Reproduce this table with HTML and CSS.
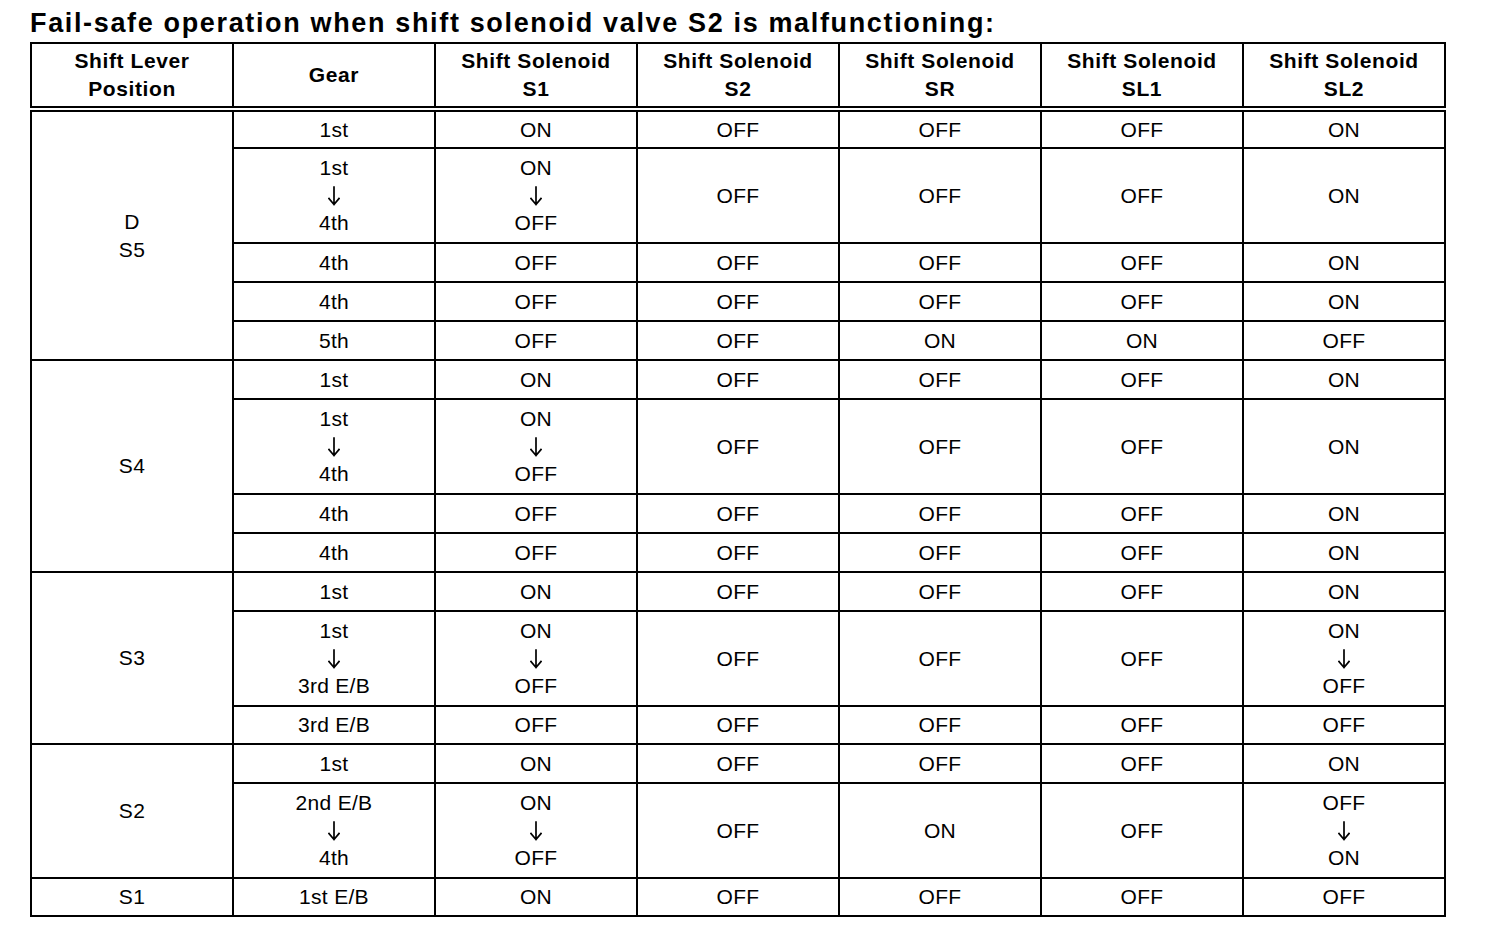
FILE: index.html
```html
<!DOCTYPE html>
<html>
<head>
<meta charset="utf-8">
<link rel="stylesheet" href="styles.css">
</head>
<body>
<div class="page">
<h1 class="title">Fail-safe operation when shift solenoid valve S2 is malfunctioning:</h1>
<table class="grid">
<thead>
<tr>
<th>Shift Lever<br>Position</th>
<th>Gear</th>
<th>Shift Solenoid<br>S1</th>
<th>Shift Solenoid<br>S2</th>
<th>Shift Solenoid<br>SR</th>
<th>Shift Solenoid<br>SL1</th>
<th>Shift Solenoid<br>SL2</th>
</tr>
</thead>
<tbody>
<tr class="r1 first"><td rowspan="5" class="pos">D<br>S5</td><td>1st</td><td>ON</td><td>OFF</td><td>OFF</td><td>OFF</td><td>ON</td></tr>
<tr class="r3"><td>1st<br><svg class="arr" viewBox="0 0 12 20"><path d="M6 1V18.5M1 12.5L6 18.5L11 12.5"/></svg><br>4th</td><td>ON<br><svg class="arr" viewBox="0 0 12 20"><path d="M6 1V18.5M1 12.5L6 18.5L11 12.5"/></svg><br>OFF</td><td>OFF</td><td>OFF</td><td>OFF</td><td>ON</td></tr>
<tr class="r1"><td>4th</td><td>OFF</td><td>OFF</td><td>OFF</td><td>OFF</td><td>ON</td></tr>
<tr class="r1"><td>4th</td><td>OFF</td><td>OFF</td><td>OFF</td><td>OFF</td><td>ON</td></tr>
<tr class="r1"><td>5th</td><td>OFF</td><td>OFF</td><td>ON</td><td>ON</td><td>OFF</td></tr>

<tr class="r1"><td rowspan="4" class="pos">S4</td><td>1st</td><td>ON</td><td>OFF</td><td>OFF</td><td>OFF</td><td>ON</td></tr>
<tr class="r3"><td>1st<br><svg class="arr" viewBox="0 0 12 20"><path d="M6 1V18.5M1 12.5L6 18.5L11 12.5"/></svg><br>4th</td><td>ON<br><svg class="arr" viewBox="0 0 12 20"><path d="M6 1V18.5M1 12.5L6 18.5L11 12.5"/></svg><br>OFF</td><td>OFF</td><td>OFF</td><td>OFF</td><td>ON</td></tr>
<tr class="r1"><td>4th</td><td>OFF</td><td>OFF</td><td>OFF</td><td>OFF</td><td>ON</td></tr>
<tr class="r1"><td>4th</td><td>OFF</td><td>OFF</td><td>OFF</td><td>OFF</td><td>ON</td></tr>

<tr class="r1"><td rowspan="3" class="pos">S3</td><td>1st</td><td>ON</td><td>OFF</td><td>OFF</td><td>OFF</td><td>ON</td></tr>
<tr class="r3"><td>1st<br><svg class="arr" viewBox="0 0 12 20"><path d="M6 1V18.5M1 12.5L6 18.5L11 12.5"/></svg><br>3rd E/B</td><td>ON<br><svg class="arr" viewBox="0 0 12 20"><path d="M6 1V18.5M1 12.5L6 18.5L11 12.5"/></svg><br>OFF</td><td>OFF</td><td>OFF</td><td>OFF</td><td>ON<br><svg class="arr" viewBox="0 0 12 20"><path d="M6 1V18.5M1 12.5L6 18.5L11 12.5"/></svg><br>OFF</td></tr>
<tr class="r1 short"><td>3rd E/B</td><td>OFF</td><td>OFF</td><td>OFF</td><td>OFF</td><td>OFF</td></tr>

<tr class="r1"><td rowspan="2" class="pos">S2</td><td>1st</td><td>ON</td><td>OFF</td><td>OFF</td><td>OFF</td><td>ON</td></tr>
<tr class="r3"><td>2nd E/B<br><svg class="arr" viewBox="0 0 12 20"><path d="M6 1V18.5M1 12.5L6 18.5L11 12.5"/></svg><br>4th</td><td>ON<br><svg class="arr" viewBox="0 0 12 20"><path d="M6 1V18.5M1 12.5L6 18.5L11 12.5"/></svg><br>OFF</td><td>OFF</td><td>ON</td><td>OFF</td><td>OFF<br><svg class="arr" viewBox="0 0 12 20"><path d="M6 1V18.5M1 12.5L6 18.5L11 12.5"/></svg><br>ON</td></tr>

<tr class="r1 last"><td class="pos">S1</td><td>1st E/B</td><td>ON</td><td>OFF</td><td>OFF</td><td>OFF</td><td>OFF</td></tr>
</tbody>
</table>
</div>
</body>
</html>
```

FILE: styles.css
```css
html, body {
  margin: 0;
  padding: 0;
  background: #ffffff;
}

.page {
  padding: 8px 0 0 30px;
  font-family: "Liberation Sans", Arial, sans-serif;
  color: #000000;
}

.title {
  margin: 0 0 4px 0;
  font-size: 27px;
  font-weight: bold;
  line-height: 30px;
  letter-spacing: 1.65px;
  white-space: nowrap;
}

.grid {
  width: 1416px;
  table-layout: fixed;
  border-collapse: collapse;
  border: 2px solid #000;
}

.grid th,
.grid td {
  border: 2px solid #000;
  padding: 0;
  text-align: center;
  vertical-align: middle;
}

.grid th {
  height: 62px;
  font-size: 21px;
  font-weight: bold;
  line-height: 28px;
  letter-spacing: 0.6px;
  border-bottom: 6px double #000;
}

.grid td {
  font-size: 21px;
  line-height: 27.5px;
  letter-spacing: 0.3px;
}

.arr {
  display: inline-block;
  width: 12px;
  height: 20px;
  vertical-align: -3px;
  fill: none;
  stroke: #000;
  stroke-width: 1.7;
  stroke-linecap: square;
  stroke-linejoin: miter;
}

.grid .r1 td {
  height: 37px;
}

.grid .r1.first td {
  height: 35px;
}

.grid .r1.short td {
  height: 36px;
}

.grid .r1.last td {
  height: 36px;
}

.grid .r3 td {
  height: 93px;
}

.grid .r3 td.pos,
.grid .r1 td.pos {
  height: auto;
}
```
